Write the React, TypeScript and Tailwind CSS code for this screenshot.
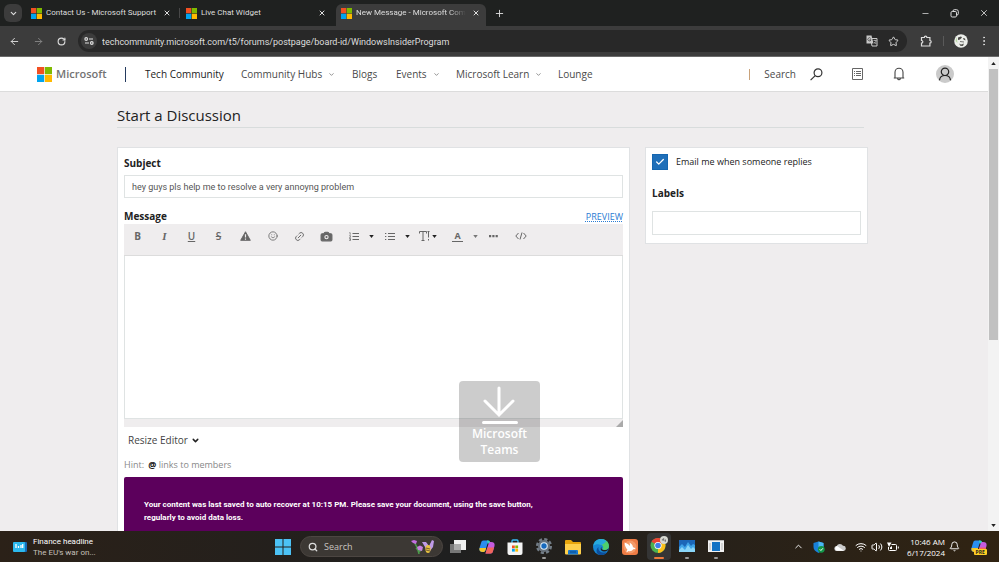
import type { ReactNode } from "react"
import {
  ArrowLeft,
  ArrowRight,
  Bell,
  Camera,
  Check,
  ChevronDown,
  ChevronUp,
  EllipsisVertical,
  Link2,
  Minus,
  Plus,
  RotateCw,
  Search,
  Smile,
  Star,
  Volume2,
  Wifi,
  X,
} from "lucide-react"

function MicrosoftLogo({ className }: { className: string }) {
  return (
    <svg viewBox="0 0 23 23" className={className} aria-hidden="true">
      <path d="M0 0h11v11H0z" fill="#f25022" />
      <path d="M12 0h11v11H12z" fill="#7fba00" />
      <path d="M0 12h11v11H0z" fill="#00a4ef" />
      <path d="M12 12h11v11H12z" fill="#ffb900" />
    </svg>
  )
}

function Caret({ light, up }: { light?: boolean; up?: boolean }) {
  return (
    <svg viewBox="0 0 6 4" className={light ? "h-[3px] w-[5px] text-[#777]" : "h-[3px] w-[5px] text-[#222]"} aria-hidden="true">
      <path d={up ? "M0 4h6L3 0z" : "M0 0h6L3 4z"} fill="currentColor" />
    </svg>
  )
}

/* ---------- browser chrome ---------- */

const tabs = [
  { title: "Contact Us - Microsoft Support", active: false, divider: true },
  { title: "Live Chat Widget", active: false, divider: false },
  { title: "New Message - Microsoft Com", active: true, divider: false },
]

function TabStrip() {
  return (
    <div className="flex h-[26px] shrink-0 items-center bg-[#1f2120] text-[#dedede]">
      <button aria-label="Search tabs" className="ml-1 flex h-[18px] w-[18px] items-center justify-center rounded-md bg-[#3c3c3c]">
        <ChevronDown size={9} strokeWidth={3} />
      </button>
      <div className="ml-1 flex h-full items-end font-[Roboto,sans-serif]">
        {tabs.map((tab) => (
          <div
            key={tab.title}
            className={
              tab.active
                ? "flex h-[22px] w-[150px] items-center rounded-t-md bg-[#3c3c3c] pr-[6px] pb-1 pl-[5px]"
                : "flex h-[22px] w-[155px] items-center pr-px pb-1 pl-[5px]"
            }
          >
            <MicrosoftLogo className="h-[11px] w-[11px] shrink-0" />
            <span
              className={
                tab.active
                  ? "ml-1 w-[110px] mask-r-from-85% text-[8px] whitespace-nowrap"
                  : "ml-1 w-[114px] text-[8px] whitespace-nowrap"
              }
            >
              {tab.title}
            </span>
            <button aria-label={`Close ${tab.title}`} className="ml-auto">
              <X size={8} strokeWidth={3} />
            </button>
            {!tab.active && <span className={tab.divider ? "ml-2 h-[10px] w-px bg-[#484848]" : "ml-2 h-[10px] w-px"} />}
          </div>
        ))}
      </div>
      <button aria-label="New tab" className="ml-2">
        <Plus size={11} strokeWidth={2} />
      </button>
      <div className="ml-auto flex items-center gap-5 pr-[10px]">
        <button aria-label="Minimize"><Minus size={9} strokeWidth={2} /></button>
        <button aria-label="Restore">
          <svg viewBox="0 0 9 9" className="h-[9px] w-[9px]" fill="none" stroke="currentColor" aria-hidden="true">
            <rect x="1" y="2.5" width="5.5" height="5.5" rx="1.2" />
            <path d="M3 2.2V2a1.3 1.3 0 0 1 1.3-1.3h2.2A1.8 1.8 0 0 1 8.3 2.5v2.2A1.3 1.3 0 0 1 7 6" />
          </svg>
        </button>
        <button aria-label="Close"><X size={10} strokeWidth={2} /></button>
      </div>
    </div>
  )
}

function AddressBar() {
  return (
    <div className="flex h-[31px] shrink-0 items-center border-b border-[#6a6a6a] bg-[#3c3c3c] text-[#dedede]">
      <div className="flex items-center gap-[13px] pl-[9px]">
        <button aria-label="Back"><ArrowLeft size={11} strokeWidth={2} /></button>
        <button aria-label="Forward" className="text-[#858585]"><ArrowRight size={11} strokeWidth={2} /></button>
        <button aria-label="Reload"><RotateCw size={9} strokeWidth={3} /></button>
      </div>
      <div className="ml-3 flex h-[22px] flex-1 items-center rounded-full bg-[#282828] pr-2 pl-[3px]">
        <button aria-label="Site information" className="flex h-4 w-4 items-center justify-center rounded-full bg-[#3c3c3c]">
          <svg viewBox="0 0 10 8" className="h-2 w-[10px]" fill="none" stroke="currentColor" strokeWidth="1.2" aria-hidden="true">
            <circle cx="2.2" cy="2" r="1.3" />
            <path d="M5 2h4M1 6h4" />
            <circle cx="7.8" cy="6" r="1.3" />
          </svg>
        </button>
        <input
          aria-label="Address"
          className="ml-[5px] h-[22px] min-w-0 flex-1 bg-transparent pt-[2px] font-[Roboto,sans-serif] text-[9px] outline-none"
          defaultValue="techcommunity.microsoft.com/t5/forums/postpage/board-id/WindowsInsiderProgram"
        />
        <button aria-label="Translate">
          <svg viewBox="0 0 12 12" className="h-3 w-3" aria-hidden="true">
            <path d="M4.5 3.5h6.5v7.5h-5z" fill="none" stroke="#c8c8c8" />
            <path d="M.5.5h5l2 8h-7z" fill="#c8c8c8" />
            <path d="M4.7 3.4A1.6 1.6 0 1 0 5 4.8H3.5" fill="none" stroke="#444" strokeWidth=".8" />
            <path d="M7.5 5.5h3M9 4.7v.8M10 5.5c-.3 1.5-1 2.3-2 3M8.3 7l1.9 2" fill="none" stroke="#c8c8c8" strokeWidth=".7" />
          </svg>
        </button>
        <button aria-label="Bookmark" className="ml-[10px]"><Star size={11} strokeWidth={2} /></button>
      </div>
      <div className="flex items-center pr-[9px] pl-[13px]">
        <button aria-label="Extensions">
          <svg viewBox="0 0 12 12" className="h-3 w-3" fill="none" stroke="currentColor" strokeWidth="1.2" aria-hidden="true">
            <path d="M1.5 2.5h2.8a1.3 1.3 0 0 1 2.6 0h3v3a1.3 1.3 0 0 1 0 2.6V11H1.500V8.200a1.300 1.300 0 0 0 0-2.700z" />
          </svg>
        </button>
        <span className="ml-[11px] h-[10px] w-px bg-[#5a5a5a]" />
        <button aria-label="Profile" className="ml-[10px]">
          <svg viewBox="0 0 14 14" className="h-[14px] w-[14px]" aria-hidden="true">
            <circle cx="7" cy="7" r="6.8" fill="#eceeea" />
            <path d="M4 3.5l3-1 1 1-2 2-2 .5zM9 4l2 .5.5 2-2-1z" fill="#4a4a46" />
            <path d="M5 9.5l2 1 3-1-1 2.5H6.5z" fill="#5a5a56" />
            <path d="M2.5 3l1 6-2-2z" fill="#b9d9a5" />
            <path d="M6 7.5l4 .5" stroke="#555" strokeWidth=".8" />
          </svg>
        </button>
        <button aria-label="Menu" className="ml-[10px]"><EllipsisVertical size={12} strokeWidth={2} /></button>
      </div>
    </div>
  )
}

/* ---------- site header ---------- */

function SiteHeader() {
  return (
    <header className="flex h-[35px] items-center border-b border-[#dcdcdc] bg-white pr-[34px] pl-[37px] text-[10px] text-[#4a4a4a]">
      <a href="#" className="flex w-[70px] items-center gap-1">
        <MicrosoftLogo className="h-[15px] w-[15px] shrink-0" />
        <span className="text-[11px] font-semibold text-[#737373]">Microsoft</span>
      </a>
      <span className="ml-[18px] h-[15px] w-px bg-[#243a5e]" />
      <nav className="ml-[19px] flex items-center">
        <a href="#" className="w-[96px] text-[#222]">Tech Community</a>
        <button className="flex w-[111px] items-center gap-[6px]">
          Community Hubs <ChevronDown size={7} strokeWidth={2} />
        </button>
        <a href="#" className="w-[44px]">Blogs</a>
        <button className="flex w-[60px] items-center gap-[6px]">
          Events <ChevronDown size={7} strokeWidth={2} />
        </button>
        <button className="flex w-[102px] items-center gap-[6px]">
          Microsoft Learn <ChevronDown size={7} strokeWidth={2} />
        </button>
        <a href="#">Lounge</a>
      </nav>
      <div className="ml-auto flex items-center">
        <span className="h-[11px] w-px bg-[#c9a27a]" />
        <button className="ml-[14px] flex items-center gap-[14px]">
          Search
          <svg viewBox="0 0 13 13" className="h-[13px] w-[13px]" fill="none" stroke="#333" strokeWidth="1.2" aria-hidden="true">
            <circle cx="8" cy="4.8" r="3.9" />
            <path d="M5.2 7.6L.6 12.2" />
          </svg>
        </button>
        <button aria-label="Reading list" className="ml-[29px]">
          <svg viewBox="0 0 11 12" className="h-3 w-[11px]" fill="none" stroke="#666" aria-hidden="true">
            <path d="M.5.5h10v11H.5z" />
            <path d="M2 3.5h1M4 3.5h5M2 5.5h1M4 5.5h5M2 7.5h1M4 7.5h5" />
          </svg>
        </button>
        <button aria-label="Notifications" className="ml-[30px]">
          <svg viewBox="0 0 12 14" className="h-[14px] w-3" fill="none" stroke="#444" strokeWidth="1.1" aria-hidden="true">
            <path d="M.8 11h10.4M2 11V5.2a4 4 0 0 1 8 0V11M4.7 11.5a1.3 1.3 0 0 0 2.6 0" />
          </svg>
        </button>
        <button aria-label="Account" className="ml-[31px] flex h-[18px] w-[18px] items-center justify-center rounded-full bg-[#cacaca]">
          <svg viewBox="0 0 14 14" className="h-[14px] w-[14px]" fill="none" stroke="#222" strokeWidth="1.2" aria-hidden="true">
            <circle cx="7" cy="4.8" r="3.7" />
            <path d="M1.5 13.2c.3-3 2-4.7 5.5-4.7s5.2 1.7 5.5 4.7" />
          </svg>
        </button>
      </div>
    </header>
  )
}

/* ---------- editor ---------- */

function Tool({ label, children }: { label: string; children: ReactNode }) {
  return (
    <button aria-label={label} className="flex h-6 w-[27px] items-center justify-center text-[#666]">
      {children}
    </button>
  )
}

function EditorToolbar() {
  return (
    <div className="flex h-[32px] items-center border-b border-[#dcdcdc] bg-[#efedee] pb-[7px] text-[10px]">
      <Tool label="Bold"><b>B</b></Tool>
      <Tool label="Italic"><i className="font-['Liberation_Serif',serif] text-[11px] font-bold">I</i></Tool>
      <Tool label="Underline"><u className="font-semibold">U</u></Tool>
      <Tool label="Strikethrough"><s className="font-semibold">S</s></Tool>
      <Tool label="Spoiler">
        <svg viewBox="0 0 12 11" className="h-[10px] w-[11px]" aria-hidden="true">
          <path d="M6 .8L11.3 10.3H.7z" fill="#666" stroke="#666" strokeLinejoin="round" />
          <path d="M6 3.5v3.7M6 8.2v1.3" stroke="#efedee" strokeWidth="1.3" />
        </svg>
      </Tool>
      <Tool label="Emoji"><Smile size={10} strokeWidth={2} /></Tool>
      <Tool label="Link"><Link2 size={11} strokeWidth={2} className="-rotate-45" /></Tool>
      <Tool label="Photo"><Camera size={13} strokeWidth={2} fill="#666" className="[&_circle]:fill-[#666] [&_circle]:stroke-[#efedee]" /></Tool>
      <Tool label="Numbered list">
        <svg viewBox="0 0 10 9" className="h-[9px] w-[10px]" fill="none" stroke="currentColor" aria-hidden="true">
          <path d="M3.5 1.5H10M3.5 4.5H10M3.5 7.5H10" />
          <path d="M.3.7h.9v2M.2 3.7h1.3v.8l-1 .9h1.2M.2 6.5h1.3v2H.2M.6 7.5h.9" strokeWidth=".7" />
        </svg>
      </Tool>
      <button aria-label="List options" className="flex w-[9px] justify-center"><Caret /></button>
      <Tool label="Bulleted list">
        <svg viewBox="0 0 10 9" className="h-[9px] w-[10px]" fill="none" stroke="currentColor" aria-hidden="true">
          <path d="M3 1.5h7M3 4.5h7M3 7.5h7M0 1.5h1.3M0 4.5h1.3M0 7.5h1.3" />
        </svg>
      </Tool>
      <button aria-label="Bullet options" className="flex w-[9px] justify-center"><Caret /></button>
      <button aria-label="Font size" className="flex w-[32px] items-center justify-center gap-[2px] text-[#666]">
        <svg viewBox="0 0 11 10" className="h-[10px] w-[11px]" fill="none" stroke="currentColor" aria-hidden="true">
          <path d="M.5 2.5v-2h7v2M4 .5v9M2.5 9.5h3M9.5.5v6M8.5.5h2M9.5 8v1.5" />
        </svg>
        <Caret />
      </button>
      <Tool label="Text color"><span className="border-b border-[#666] px-[2px] text-[9px] leading-[11px] font-bold">A</span></Tool>
      <button aria-label="Color options" className="flex w-[9px] justify-center"><Caret light /></button>
      <Tool label="More">
        <svg viewBox="0 0 9 3" className="h-[3px] w-[9px]" fill="currentColor" aria-hidden="true">
          <path d="M0 0h2.2v2.2H0zM3.3 0h2.2v2.2H3.3zM6.6 0h2.2v2.2H6.6z" />
        </svg>
      </Tool>
      <Tool label="Source">
        <svg viewBox="0 0 12 8" className="h-2 w-3" fill="none" stroke="currentColor" aria-hidden="true">
          <path d="M3.5 1L.8 4l2.7 3M8.5 1l2.7 3-2.7 3M7 .5l-2 7" />
        </svg>
      </Tool>
    </div>
  )
}

function DiscussionForm() {
  return (
    <section className="flex-1 border border-[#e0e2e4] bg-white px-[6px] pt-[8px] text-[10px] text-[#222]">
      <label htmlFor="subject" className="block leading-[15px] font-bold">Subject</label>
      <input
        id="subject"
        defaultValue="hey guys pls help me to resolve a very annoyng problem"
        className="mt-1 block h-[23px] w-full border border-[#dfe3e3] px-[7px] font-[Roboto,sans-serif] text-[9px] text-[#555] outline-none"
      />
      <div className="mt-[11px] flex items-center justify-between leading-[15px]">
        <label htmlFor="message" className="font-bold">Message</label>
        <a href="#" className="text-[9px] text-[#2b7cd3] underline decoration-dotted">PREVIEW</a>
      </div>
      <EditorToolbar />
      <textarea id="message" className="block h-[163px] w-full resize-none border border-t-0 border-[#dfe3e3] outline-none" />
      <div className="flex h-2 items-end justify-end bg-[#efedee]">
        <svg viewBox="0 0 8 8" className="h-[7px] w-[7px]" aria-hidden="true">
          <path d="M8 0v8H0z" fill="#aaa" />
        </svg>
      </div>
      <button className="mt-[6px] ml-1 flex items-center gap-[3px] leading-[15px] text-[#444]">
        Resize Editor <ChevronDown size={9} strokeWidth={4} className="text-[#222]" />
      </button>
      <p className="mt-[9px] text-[9px] leading-[15px] text-[#888]">
        Hint: <b className="ml-[2px] text-[#111]">@</b> links to members
      </p>
      <div className="mt-[5px] rounded-t-xs bg-[#5c005c] px-5 pt-[21px] pb-5 font-[Roboto,sans-serif] text-[8px] leading-[13px] font-bold text-white">
        Your content was last saved to auto recover at 10:15 PM. Please save your document, using the save button,
        <br />
        regularly to avoid data loss.
      </div>
    </section>
  )
}

function OptionsPanel() {
  return (
    <aside className="w-[223px] border border-[#e0e2e4] bg-white px-[6px] pt-[6px] pb-2 text-[#222]">
      <label className="flex items-center gap-2 text-[9px]">
        <span className="grid h-4 w-4 place-items-center">
          <input type="checkbox" defaultChecked className="col-start-1 row-start-1 h-4 w-4 appearance-none border border-[#1566b0] bg-[#1f6fb9]" />
          <Check size={10} strokeWidth={3} className="pointer-events-none col-start-1 row-start-1 text-white" />
        </span>
        Email me when someone replies
      </label>
      <label htmlFor="labels" className="mt-4 block text-[10px] leading-[15px] font-bold">Labels</label>
      <input id="labels" className="mt-[10px] block h-6 w-full border border-[#dfe3e3] px-2 text-[9px] outline-none" />
    </aside>
  )
}

/* ---------- taskbar ---------- */

function TaskbarIcons() {
  return (
    <div className="ml-[6px] flex w-[276px] items-center justify-between">
      <button aria-label="Task view">
        <svg viewBox="0 0 18 18" className="h-[18px] w-[18px]"><path d="M5 2h12v10H5z" fill="#f0f0f0" /><path d="M1 6h11v9H1z" fill="#777" /><path d="M5 6h7v6H5z" fill="#aaa" /></svg>
      </button>
      <button aria-label="Copilot"><CopilotIcon /></button>
      <button aria-label="Microsoft Store">
        <svg viewBox="0 0 18 18" className="h-[18px] w-[18px]">
          <path d="M6 5V3a1 1 0 0 1 1-1h4a1 1 0 0 1 1 1v2" fill="none" stroke="#38bdf8" strokeWidth="1.3" />
          <path d="M1.5 4.5h15V15a2 2 0 0 1-2 2h-11a2 2 0 0 1-2-2z" fill="#f4f4f4" />
          <path d="M6 7.5h2.8v2.8H6z" fill="#f25022" /><path d="M9.3 7.5h2.8v2.8H9.3z" fill="#7fba00" />
          <path d="M6 10.8h2.8v2.8H6z" fill="#00a4ef" /><path d="M9.3 10.8h2.8v2.8H9.3z" fill="#ffb900" />
        </svg>
      </button>
      <Running label="Settings">
        <svg viewBox="0 0 18 18" className="h-[18px] w-[18px]">
          <circle cx="9" cy="9" r="6.8" fill="none" stroke="#737d87" strokeWidth="2.5" strokeDasharray="3.2 2.14" />
          <circle cx="9" cy="9" r="6" fill="#68727c" />
          <circle cx="9" cy="9" r="3.8" fill="#dcecf8" /><circle cx="9" cy="9" r="2.7" fill="#1769bd" />
        </svg>
      </Running>
      <button aria-label="File Explorer">
        <svg viewBox="0 0 18 18" className="h-[18px] w-[18px]">
          <path d="M1 3a1 1 0 0 1 1-1h5l2 2h7a1 1 0 0 1 1 1v3H1z" fill="#e8a50c" /><path d="M1 6h16v9.5a1 1 0 0 1-1 1H2a1 1 0 0 1-1-1z" fill="#ffd04c" />
          <path d="M4 16.5V13a1 1 0 0 1 1-1h8a1 1 0 0 1 1 1v3.5z" fill="#1976cc" /><path d="M6 14h6" stroke="#0b4a8a" />
        </svg>
      </button>
      <button aria-label="Edge">
        <svg viewBox="0 0 18 18" className="h-[18px] w-[18px]">
          <circle cx="9" cy="9" r="8" fill="#1686d4" />
          <path d="M9 1c4.5 0 8 3 8 7 0 2.5-2 4-4.5 4-2 0-2.5-1-1.5-2 .8-1-.5-3.5-3.5-3.5z" fill="#4fcf6c" />
          <path d="M1.2 8C2 3.5 5 1 9 1c2 0 4 .8 5.5 2C13 5 11 6 9.5 7c-3-1.3-6.5-.7-8.3 1z" fill="#27a9dd" />
          <path d="M6.5 9c-.8 4 3 6.5 8.5 5.2-2 2.8-5 3.1-7.5 2.7C4 15.5 3.5 11.5 6.5 9z" fill="#0d4e9c" />
          <path d="M10 8.5c-1.3 1.5-.5 3.8 3 3.6 1.7 0 3-.6 3.8-1.8-.2 1.8-2 3.5-5 3.3-3-.3-4.2-3.2-1.8-5.1z" fill="#222" />
        </svg>
      </button>
      <button aria-label="Bird app">
        <svg viewBox="0 0 18 18" className="h-[18px] w-[18px]">
          <rect x="1" y="1" width="16" height="16" rx="3" fill="#ee7c45" /><circle cx="9" cy="9" r="6.5" fill="#f49a68" />
          <path d="M3.5 4.500c2.500.7 4.500 2 5.500 3.500C9 6.500 8.700 5.500 8.500 4.500c2 1.200 3.300 2.700 3.500 4.700 1.200 0 2 .7 2.500 1.800l-2.300.3c-1 1.700-3 2.200-4.700 1.700L5.500 14.500c0-1.300.3-2.200 1-2.800C4.700 10 3.700 7.500 3.500 4.500z" fill="#fff" />
        </svg>
      </button>
      <Running label="Chrome" active>
        <svg viewBox="0 0 18 18" className="h-[18px] w-[18px]">
          <circle cx="8" cy="9.5" r="7.5" fill="#4caf50" />
          <path d="M8 9.5L1.5 5.8A7.5 7.5 0 0 1 14.5 5.8z" fill="#ea4335" />
          <path d="M8 9.5l6.5-3.7A7.5 7.5 0 0 1 8 17z" fill="#fbc11b" />
          <circle cx="8" cy="9.5" r="3.6" fill="#fff" /><circle cx="8" cy="9.5" r="2.8" fill="#3f7ee8" />
          <circle cx="14" cy="4" r="4" fill="#d7d9d2" /><path d="M11.5 4l2-2 1 1-1 2zM14 5l2-2v3z" fill="#777" />
        </svg>
      </Running>
      <Running label="Task Manager">
        <svg viewBox="0 0 18 18" className="h-[18px] w-[18px]"><path d="M1 3h16v12H1z" fill="#3fa4e8" /><path d="M1 3h16v5l-2-1-2 2-3-4-3 5-3-3-3 3z" fill="#1c67b8" /><path d="M1 15v-2l3-3 3 3 3-5 3 4 2-2 2 2v3z" fill="#8ad6f8" /></svg>
      </Running>
      <Running label="Window">
        <svg viewBox="0 0 18 18" className="h-[18px] w-[18px]"><path d="M1 3h16v12H1z" fill="#f2f2f2" /><path d="M1 3h16v1H1z" fill="#bbb" /><path d="M5 5h8v9H5z" fill="#1372c4" /><path d="M2 6h2v7H2zM14 6h2v7h-2z" fill="#d4d4d4" /></svg>
      </Running>
    </div>
  )
}

function Running({ label, active, children }: { label: string; active?: boolean; children: ReactNode }) {
  return (
    <button
      aria-label={label}
      className={active ? "-mx-[3px] flex h-[27px] w-6 flex-col items-center justify-end rounded-sm bg-[#353535]" : "flex h-[27px] flex-col items-center justify-end"}
    >
      {children}
      <span className={active ? "mt-[3px] mb-px h-[2px] w-[10px] rounded-full bg-[#ee7a3c]" : "mt-[2px] mb-px h-[2px] w-1 rounded-full bg-[#9a9a9a]"} />
    </button>
  )
}

function CopilotIcon({ pre }: { pre?: boolean }) {
  return (
    <svg viewBox="0 0 18 18" className="h-[18px] w-[18px]" aria-hidden="true">
      <path d="M5.5 2.5h5L7.5 12c-.5 1.5-1 2-2.5 2-3 0-4-1.5-3.5-4l1.5-5c.5-1.7 1-2.5 2.5-2.5z" fill="#2b8ef0" />
      <path d="M1.5 10h6.7l-.7 2c-.5 1.5-1 2-2.5 2-3 0-4-1.5-3.5-4z" fill="#f3c52a" />
      <path d="M9 2.5h1c2 0 2 1 2.5 3h-3z" fill="#2fd0c3" />
      <path d="M12.5 15.5h-5l3-9.5c.5-1.5 1-2 2.5-2 3 0 4 1.5 3.5 4L15 13c-.5 1.7-1 2.5-2.5 2.5z" fill="#c55be0" />
      <path d="M16 9.5l-1 3.5c-.5 1.7-1 2.5-2.5 2.5h-5l2-6z" fill="#f2655c" />
      {pre && <rect x="4" y="11" width="13" height="6" rx="1" fill="#ffcf24" />}
      {pre && <text x="5.5" y="16" fontSize="5" fontWeight="bold" fill="#222">PRE</text>}
    </svg>
  )
}

function Taskbar() {
  return (
    <footer className="flex h-[31px] shrink-0 items-center bg-linear-to-r from-[#2b2118] via-[#1f1f1f] via-45% to-[#302312] text-white">
      <button className="flex w-[275px] items-center gap-[6px] pl-[13px] text-left font-[Roboto,sans-serif] text-[8px] leading-[11px]">
        <svg viewBox="0 0 14 12" className="h-3 w-[14px]" aria-hidden="true">
          <path d="M3 1h10a1 1 0 0 1 1 1v8a1 1 0 0 1-1 1H3z" fill="#176bb8" />
          <rect y="1" width="12" height="10" rx="1" fill="#2cb9ee" />
          <path d="M3 3v4M5.5 5v2M8 4v3M9.7 3v4" stroke="#fff" strokeWidth="1.3" />
        </svg>
        <span>
          Finance headline
          <span className="block text-[#c6c0bb]">The EU's war on...</span>
        </span>
      </button>
      <button aria-label="Start">
        <svg viewBox="0 0 16 16" className="h-4 w-4"><path d="M0 0h7.5v7.5H0zM8.5 0H16v7.5H8.5zM0 8.5h7.5V16H0zM8.5 8.5H16V16H8.5z" fill="#4cc2f5" /></svg>
      </button>
      <label className="ml-[9px] flex h-[21px] w-[143px] items-center gap-[6px] rounded-full border border-[#4c4642] bg-[#3c3834] px-[7px]">
        <Search size={10} strokeWidth={3} className="shrink-0 text-[#ddd]" />
        <input aria-label="Search" placeholder="Search" className="w-0 flex-1 bg-transparent text-[9px] outline-none placeholder:text-[#c8c4c0]" />
        <svg viewBox="0 0 24 16" className="h-4 w-6 shrink-0" aria-hidden="true">
          <path d="M3 3c2 3 4 5 5 12M8 12l-3-3M8 13l3-3" fill="none" stroke="#4d9d4c" strokeWidth="1.5" />
          <path d="M0 2l3-1 3 1-1 3-3-1z" fill="#c56ee2" />
          <path d="M6 8l3-1.5L12 8l-1 4-4-1z" fill="#c980e0" />
          <path d="M14 8l-3-5 4 0 3 4 3-6 2 1-1 6-3 4-3 0z" fill="#bf9be8" />
          <ellipse cx="17" cy="10" rx="2.6" ry="4" fill="#e9c340" /><path d="M15 9l4 1M15 11l4 1" stroke="#574431" strokeWidth=".8" />
        </svg>
      </label>
      <TaskbarIcons />
      <div className="ml-auto flex items-center pr-[11px]">
        <div className="flex items-center gap-[9px]">
          <button aria-label="Show hidden icons"><ChevronUp size={11} strokeWidth={2} /></button>
          <svg viewBox="0 0 12 12" className="h-3 w-3" role="img" aria-label="Windows Security">
            <path d="M5.5.5l5 1.5v4c0 3-2 4.5-5 6-3-1.5-5-3-5-6V2z" fill="#1880d8" /><path d="M5.5.5l5 1.5v4h-5z" fill="#4bb8f2" />
            <circle cx="8.3" cy="8.3" r="3.4" fill="#13974a" /><path d="M6.7 8.3l1.2 1.2 2-2.2" stroke="#fff" fill="none" />
          </svg>
          <svg viewBox="0 0 12 8" className="h-2 w-3" role="img" aria-label="OneDrive">
            <path d="M3 8a2.5 2.5 0 0 1-.3-5A3.5 3.5 0 0 1 9 2.8 2.6 2.6 0 0 1 9.4 8z" fill="#ccc" /><path d="M3 3l7 4.8H3A2.5 2.5 0 0 1 3 3z" fill="#fff" />
          </svg>
          <button aria-label="Network, sound and battery" className="flex items-center gap-1">
            <Wifi size={12} strokeWidth={2} />
            <Volume2 size={12} strokeWidth={2} />
            <svg viewBox="0 0 12 10" className="h-[10px] w-3" fill="none" stroke="currentColor" aria-hidden="true">
              <path d="M4.5 2.5h4a1 1 0 0 1 1 1v4a1 1 0 0 1-1 1h-6a1 1 0 0 1-1-1V5M11.3 4.5v2" />
              <path d="M0 .5h4.5L2 5z" fill="currentColor" stroke="none" />
              <path d="M3 7V5.5L5 4v3z" fill="currentColor" stroke="none" />
            </svg>
          </button>
        </div>
        <button className="ml-2 text-right text-[8px] leading-[11px]">
          10:46 AM
          <span className="block">6/17/2024</span>
        </button>
        <button aria-label="Notifications" className="ml-1"><Bell size={11} strokeWidth={2} /></button>
        <button aria-label="Copilot preview" className="ml-[10px]"><CopilotIcon pre /></button>
      </div>
    </footer>
  )
}

export default function App() {
  return (
    <div className="flex h-screen flex-col overflow-hidden font-['Open_Sans','Noto_Sans',sans-serif]">
      <TabStrip />
      <AddressBar />
      <div className="flex min-h-0 flex-1">
        <div className="relative min-w-0 flex-1 overflow-hidden bg-[#efedee]">
          <SiteHeader />
          <main className="pr-[120px] pl-[117px]">
            <h1 className="mt-3 mr-1 border-b border-[#d8dcdc] text-[15px] leading-[23px] font-medium text-[#222]">Start a Discussion</h1>
            <div className="mt-[19px] flex items-start gap-[15px]">
              <DiscussionForm />
              <OptionsPanel />
            </div>
          </main>
          <div className="absolute top-[324px] left-[459px] flex h-[81px] w-[81px] flex-col items-center rounded bg-black/20 pt-[5px] text-center text-[12px] leading-[16px] font-semibold text-white">
            <svg viewBox="0 0 36 40" className="h-10 w-9 shrink-0" fill="none" stroke="#fff" strokeWidth="3" strokeLinecap="round" aria-hidden="true">
              <path d="M17 2v26M3 15l14 14 14-14M1.5 36.5h33" />
            </svg>
            <p>
              Microsoft
              <br />
              Teams
            </p>
          </div>
        </div>
        <div className="flex w-[11px] flex-col items-center bg-[#f3f3f3]">
          <button aria-label="Scroll up" className="flex h-3 items-center"><Caret up /></button>
          <div className="h-[271px] w-[9px] bg-[#c1c1c1]" />
          <button aria-label="Scroll down" className="mt-auto flex h-3 items-center"><Caret /></button>
        </div>
      </div>
      <Taskbar />
    </div>
  )
}
